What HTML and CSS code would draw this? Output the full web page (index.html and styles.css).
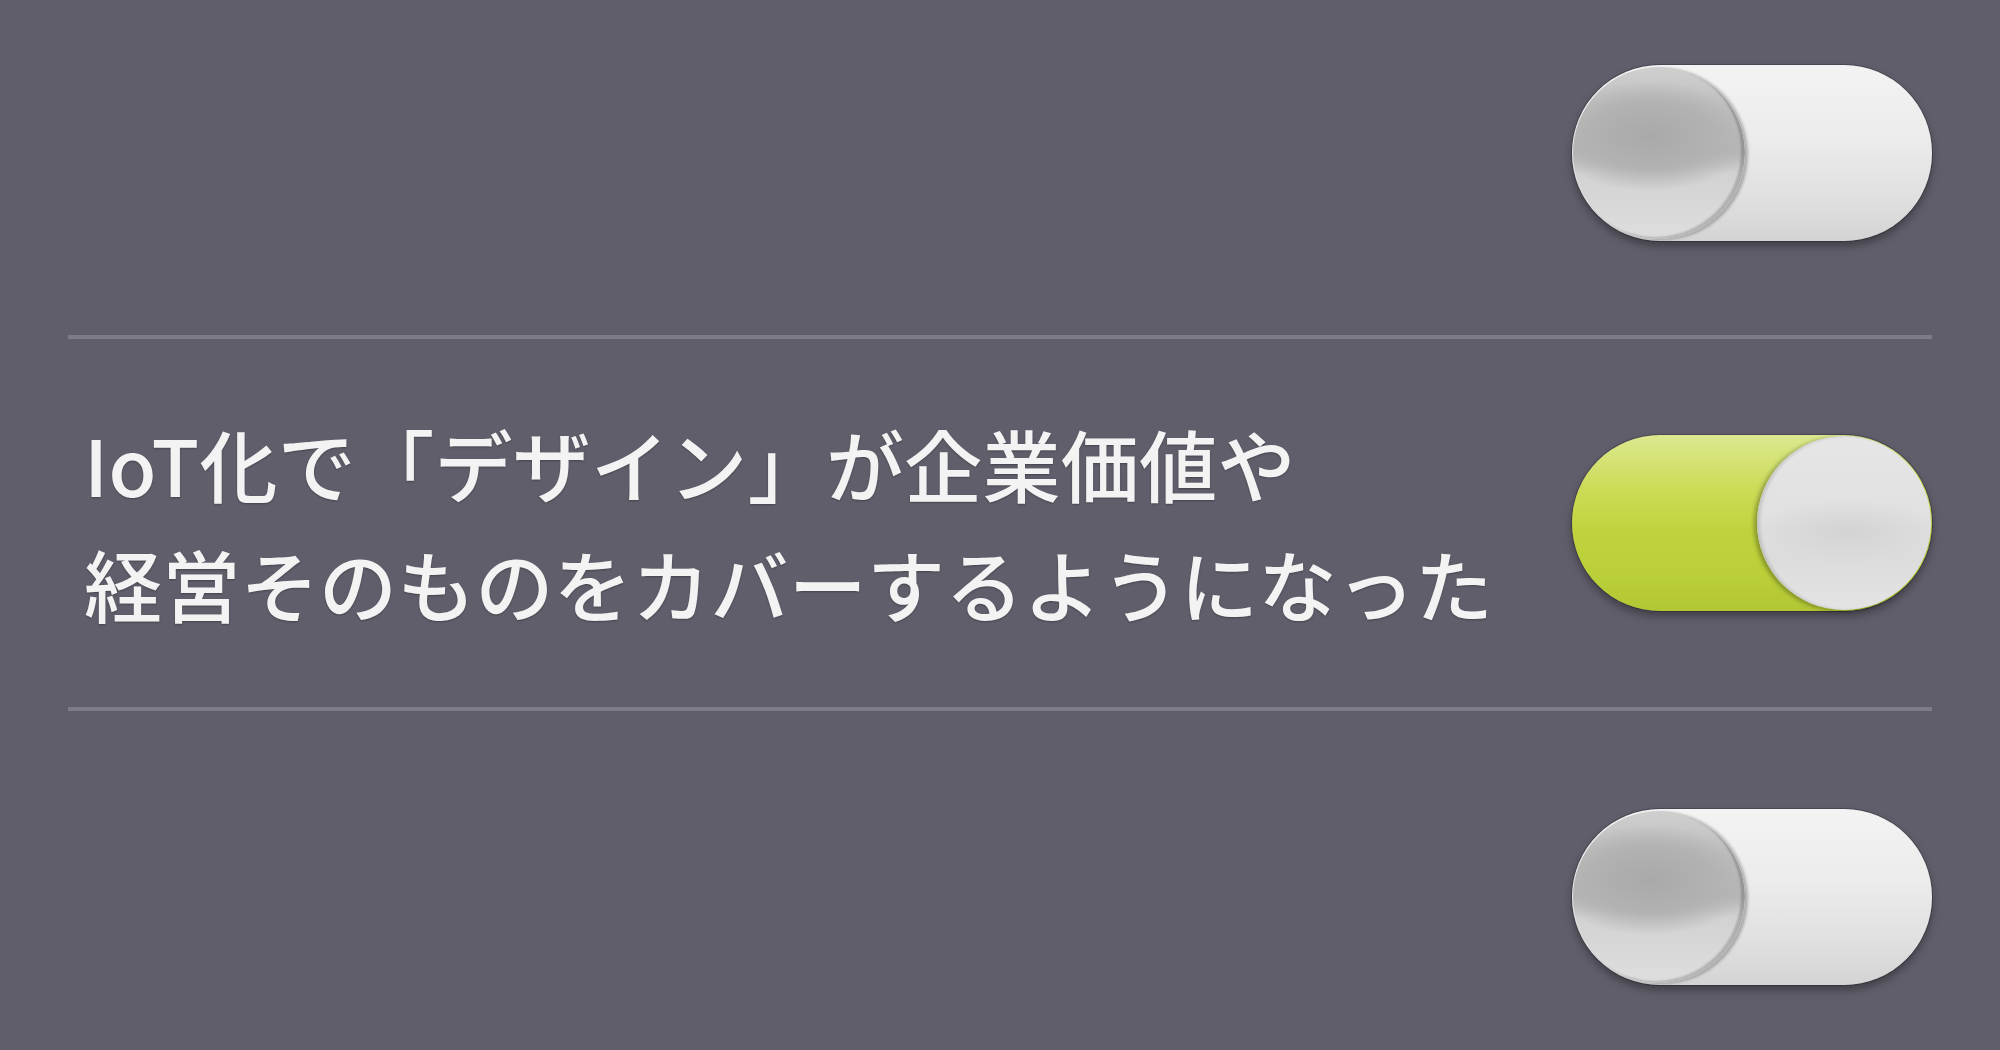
FILE: index.html
```html
<html>

<head>
  <title>設定</title>
  <meta charset="utf-8">
  <link rel="stylesheet" href="styles.css">
</head>

<body>
  <ul class="settings">
    <li class="setting first">
      <span class="label"></span>
      <span class="switch"><span class="knob"></span></span>
    </li>
    <li class="setting">
      <span class="label">IoT化で「デザイン」が企業価値や<br>経営そのものをカバーするようになった</span>
      <span class="switch on"><span class="knob"></span></span>
    </li>
    <li class="setting last">
      <span class="label"></span>
      <span class="switch"><span class="knob"></span></span>
    </li>
  </ul>
</body>

</html>
```

FILE: styles.css
```css
* {
  margin: 0;
  padding: 0;
}

li {
  list-style: none;
}

body {
  background: #615e6b;
  font-family: "Noto Sans CJK JP", "Noto Sans", sans-serif;
  overflow: hidden;
}

.settings {
  margin: 0 68px;
}

.setting {
  display: flex;
  align-items: center;
  justify-content: space-between;
  height: 372px;
  box-sizing: border-box;
  border-bottom: 4px solid #7f7c89;
}

/* 上の行は途中から見えている */
.setting.first {
  height: 339px;
  padding-bottom: 29px;
}

.setting.last {
  border-bottom: none;
}

.label {
  padding-left: 16px;
  font-size: 78px;
  font-weight: 500;
  line-height: 120px;
  letter-spacing: 0.3px;
  color: #f3f3f3;
  text-shadow: 0 1px 2px rgba(0, 0, 0, .3);
  white-space: nowrap;
}

/* スイッチ本体 */
.switch {
  display: flex;
  align-items: center;
  justify-content: flex-start;
  width: 360px;
  height: 176px;
  padding: 0 1px;
  box-sizing: border-box;
  border-radius: 88px;
  background: linear-gradient(#f3f3f3 0%, #ececec 40%, #e0e0e0 75%, #d4d4d4 100%);
  box-shadow: 0 5px 8px rgba(0, 0, 0, .35), 0 0 0 1px rgba(40, 38, 48, .35);
}

.knob {
  width: 172px;
  height: 172px;
  border-radius: 50%;
  background:
    radial-gradient(ellipse 60% 32% at 45% 40%, #a9a9a9 0%, #b2b2b2 60%, rgba(190, 190, 190, 0) 100%),
    linear-gradient(#cfcfcf 0%, #bdbdbd 30%, #b6b6b6 50%, #d2d2d2 62%, #dedede 100%);
  box-shadow: inset -4px -2px 2px rgba(0, 0, 0, .18), 3px 1px 3px rgba(0, 0, 0, .25);
}

.switch.on {
  justify-content: flex-end;
  background: linear-gradient(#dde88f 0%, #ccdc58 30%, #c0d33d 55%, #bbcf38 80%, #b3c634 100%);
}

.switch.on .knob {
  width: 174px;
  height: 174px;
  background:
    radial-gradient(ellipse 55% 18% at 52% 55%, #d3d3d3 0%, rgba(220, 220, 220, 0) 100%),
    linear-gradient(#e6e6e6 0%, #e0e0e0 50%, #dcdcdc 70%, #e4e4e4 100%);
  box-shadow: inset 3px 0 3px rgba(0, 0, 0, .12), -3px 1px 4px rgba(0, 0, 0, .3);
}
```
